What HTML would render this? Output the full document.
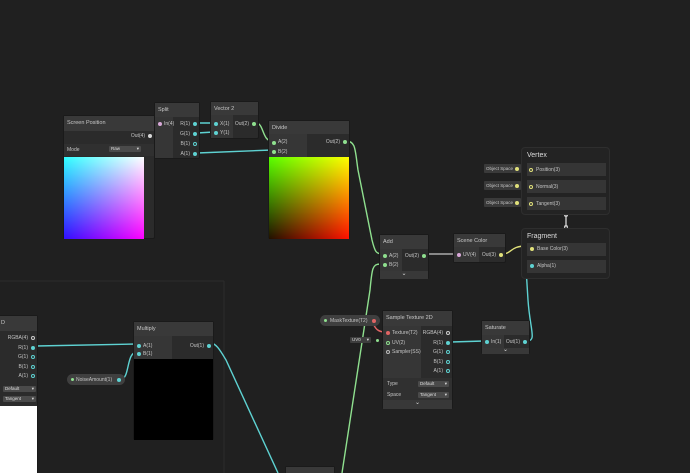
<!DOCTYPE html>
<html><head><meta charset="utf-8"><style>
*{margin:0;padding:0;box-sizing:border-box}
html,body{width:690px;height:473px;overflow:hidden}
body{background:#202020;position:relative;font-family:"Liberation Sans",sans-serif;font-size:5px;color:#c4c4c4}
.n{position:absolute;background:#2b2b2b;border:1px solid #1a1a1a;border-radius:2px}
.h{position:absolute;left:0;right:0;top:0;background:#393939;color:#c8c8c8;padding:4px 3px 0;font-size:5.5px}
.a{position:absolute;white-space:nowrap;line-height:6px}
.r{position:absolute;background:#333}
.p{position:absolute;width:4px;height:4px;border-radius:50%}
.g{background:#8fe08f}.c{background:#5ed2d2}.m{background:#d8a8d8}.y{background:#e0e07a}.rd{background:#e06464}
.o{border:1px solid #5ed2d2;background:transparent}
.dd{position:absolute;background:#4a4a4a;border-radius:1px;height:6px;font-size:4.5px;padding-left:2px;line-height:6px;color:#ddd}
.dd:after{content:"▾";position:absolute;right:2px;top:0}
.blk{position:absolute;border:1px solid #2e2e2e;border-radius:4px;background:#232323}
.row{position:absolute;left:5px;right:3px;height:13px;background:#353535}
.pill{position:absolute;background:#3f3f3f;border-radius:6px;height:10px}
</style></head><body>

<svg width="690" height="473" style="position:absolute;left:0;top:0">
<g fill="none" stroke-width="1.4">
<path d="M224 281 L0 281 M224 281 L224 473" stroke="#2c2c2c" stroke-width="1"/>
<path d="M152 135 C160 135 150 123 159 123" stroke="#d8a8d8"/>
<path d="M197 123 L205 123 C207 123 207 123 214 123" stroke="#5ed2d2"/>
<path d="M197 133 L214 132" stroke="#5ed2d2"/>
<path d="M197 153 L272 150" stroke="#5ed2d2"/>
<path d="M256 123 C264 123 262 141 272 141" stroke="#8fe08f"/>
<path d="M346 141 C356 141 355 150 358 170 L372 240 C375 252 376 254 383 254" stroke="#8fe08f"/>
<path d="M425 254 L457 254" stroke="#aaa"/>
<path d="M502 254 C512 254 510 246 526 246" stroke="#e0e07a"/>
<path d="M380 264 C372 264 372 270 370 290 L342 473" stroke="#8fe08f"/>
<path d="M369 320 C375 320 372 332 385 332" stroke="#e06464"/>
<path d="M36 346 L137 344" stroke="#5ed2d2"/>
<path d="M121 379 C130 379 126 352 137 352" stroke="#5ed2d2"/>
<path d="M210 343 C216 343 220 350 226 360 L278 473" stroke="#5ed2d2"/>
<path d="M451 342 L484 341" stroke="#5ed2d2"/>
<path d="M527 341 C537 341 530 330 528 300 L526 268 C525 265 528 266 530 266" stroke="#5ed2d2"/>
<path d="M566 215 L566 227" stroke="#ccc"/>
<path d="M514 169 L524 169 M514 186 L524 186 M514 202 L524 202" stroke="#e0e07a"/>
</g>
<circle cx="566" cy="215" r="1.5" fill="none" stroke="#ccc"/><circle cx="566" cy="227" r="1.5" fill="none" stroke="#ccc"/>
</svg>

<div class="n" style="left:63px;top:115px;width:92px;height:124px">
<div class="h" style="height:15px">Screen Position</div>
<div class="a" style="right:9px;top:17px">Out(4)</div><div class="p" style="right:2px;top:18px;background:#d8d8d8"></div>
<div class="r" style="left:0;right:0;top:28px;height:12px;background:#303030"></div>
<div class="a" style="left:3px;top:31px">Mode</div>
<div class="dd" style="left:45px;top:30px;width:32px">Raw</div>
<div style="position:absolute;left:0;top:41px;width:80px;height:82px;background:linear-gradient(to right,#3010ff,#ff00ff)"><div style="position:absolute;inset:0;background:linear-gradient(to bottom,#00ff00,#000);mix-blend-mode:screen"></div></div>
</div>

<div class="n" style="left:154px;top:102px;width:46px;height:57px">
<div class="h" style="height:14px">Split</div>
<div class="r" style="left:0;width:18px;top:14px;bottom:0;background:#363636"></div>
<div class="p m" style="left:3px;top:19px"></div><div class="a" style="left:9px;top:18px">In(4)</div>
<div class="a" style="right:9px;top:18px">R(1)</div><div class="p c" style="right:2px;top:19px"></div>
<div class="a" style="right:9px;top:28px">G(1)</div><div class="p c" style="right:2px;top:29px"></div>
<div class="a" style="right:9px;top:38px">B(1)</div><div class="p o" style="right:2px;top:39px"></div>
<div class="a" style="right:9px;top:48px">A(1)</div><div class="p c" style="right:2px;top:49px"></div>
</div>

<div class="n" style="left:210px;top:101px;width:49px;height:38px">
<div class="h" style="height:13px">Vector 2</div>
<div class="r" style="left:0;width:22px;top:13px;bottom:0;background:#363636"></div>
<div class="p c" style="left:3px;top:20px"></div><div class="a" style="left:9px;top:19px">X(1)</div>
<div class="p c" style="left:3px;top:29px"></div><div class="a" style="left:9px;top:28px">Y(1)</div>
<div class="a" style="right:9px;top:19px">Out(2)</div><div class="p g" style="right:2px;top:20px"></div>
</div>

<div class="n" style="left:268px;top:120px;width:82px;height:119px">
<div class="h" style="height:13px">Divide</div>
<div class="r" style="left:0;width:38px;top:13px;height:23px;background:#363636"></div>
<div class="p g" style="left:3px;top:20px"></div><div class="a" style="left:9px;top:18px">A(2)</div>
<div class="p g" style="left:3px;top:29px"></div><div class="a" style="left:9px;top:28px">B(2)</div>
<div class="a" style="right:9px;top:18px">Out(2)</div><div class="p g" style="right:2px;top:19px"></div>
<div style="position:absolute;left:0;top:36px;width:80px;height:82px;background:linear-gradient(to right,#201000,#ff1000)"><div style="position:absolute;inset:0;background:linear-gradient(to bottom,#40ff00,#000);mix-blend-mode:screen"></div></div>
</div>

<div class="n" style="left:379px;top:234px;width:50px;height:45px">
<div class="h" style="height:14px">Add</div>
<div class="r" style="left:0;width:22px;top:14px;height:22px;background:#363636"></div>
<div class="p g" style="left:3px;top:19px"></div><div class="a" style="left:9px;top:18px">A(2)</div>
<div class="p g" style="left:3px;top:28px"></div><div class="a" style="left:9px;top:27px">B(2)</div>
<div class="a" style="right:9px;top:18px">Out(2)</div><div class="p g" style="right:2px;top:19px"></div>
<div class="r" style="left:0;right:0;top:36px;height:8px;background:#383838;text-align:center;font-size:6px;line-height:7px;color:#ddd">⌄</div>
</div>

<div class="n" style="left:453px;top:233px;width:53px;height:30px">
<div class="h" style="height:13px">Scene Color</div>
<div class="r" style="left:0;width:25px;top:13px;bottom:0;background:#363636"></div>
<div class="p m" style="left:3px;top:19px"></div><div class="a" style="left:9px;top:18px">UV(4)</div>
<div class="a" style="right:9px;top:18px">Out(3)</div><div class="p y" style="right:2px;top:19px"></div>
</div>

<div class="blk" style="left:521px;top:147px;width:89px;height:68px">
<div class="a" style="left:5px;top:5px;font-size:7px;color:#ddd">Vertex</div>
<div class="row" style="top:15px"></div><div class="row" style="top:32px"></div><div class="row" style="top:49px"></div>
<div class="a" style="left:14px;top:19px">Position(3)</div><div class="a" style="left:14px;top:36px">Normal(3)</div><div class="a" style="left:14px;top:53px">Tangent(3)</div>
<div class="p" style="left:7px;top:20px;border:1px solid #e0e07a"></div><div class="p" style="left:7px;top:37px;border:1px solid #e0e07a"></div><div class="p" style="left:7px;top:54px;border:1px solid #e0e07a"></div>
</div>
<div class="pill" style="left:484px;top:164px;width:37px;height:9px;border-radius:1px;background:#3a3a3a"><div class="a" style="left:2px;top:1.5px;font-size:4.5px">Object Space</div><div class="p y" style="right:2px;top:2.5px"></div></div>
<div class="pill" style="left:484px;top:181px;width:37px;height:9px;border-radius:1px;background:#3a3a3a"><div class="a" style="left:2px;top:1.5px;font-size:4.5px">Object Space</div><div class="p y" style="right:2px;top:2.5px"></div></div>
<div class="pill" style="left:484px;top:198px;width:37px;height:9px;border-radius:1px;background:#3a3a3a"><div class="a" style="left:2px;top:1.5px;font-size:4.5px">Object Space</div><div class="p y" style="right:2px;top:2.5px"></div></div>

<div class="blk" style="left:521px;top:228px;width:89px;height:51px">
<div class="a" style="left:5px;top:5px;font-size:7px;color:#ddd">Fragment</div>
<div class="row" style="top:14px"></div><div class="row" style="top:31px"></div>
<div class="p y" style="left:8px;top:18px"></div><div class="a" style="left:15px;top:17px">Base Color(3)</div>
<div class="p c" style="left:8px;top:35px"></div><div class="a" style="left:15px;top:34px">Alpha(1)</div>
</div>

<div class="pill" style="left:320px;top:315px;width:60px;height:11px"><div class="p g" style="left:4px;top:3.5px;width:3px;height:3px"></div><div class="a" style="left:10px;top:3px">MaskTexture(T2)</div><div class="p rd" style="right:4px;top:3.5px"></div></div>
<div class="dd" style="left:350px;top:337px;width:21px;background:#3e3e3e">UV0</div>
<div class="p g" style="left:376px;top:339px;width:3px;height:3px"></div>

<div class="n" style="left:382px;top:310px;width:71px;height:99px">
<div class="h" style="height:15px">Sample Texture 2D</div>
<div class="r" style="left:0;width:38px;top:15px;height:52px;background:#363636"></div>
<div class="p rd" style="left:3px;top:20px"></div><div class="a" style="left:9px;top:19px">Texture(T2)</div>
<div class="p" style="left:3px;top:30px;border:1px solid #8fe08f"></div><div class="a" style="left:9px;top:29px">UV(2)</div>
<div class="p" style="left:3px;top:39px;border:1px solid #bbb"></div><div class="a" style="left:9px;top:38px">Sampler(SS)</div>
<div class="a" style="right:9px;top:19px">RGBA(4)</div><div class="p" style="right:2px;top:20px;border:1px solid #ccc"></div>
<div class="a" style="right:9px;top:29px">R(1)</div><div class="p c" style="right:2px;top:30px"></div>
<div class="a" style="right:9px;top:38px">G(1)</div><div class="p o" style="right:2px;top:39px"></div>
<div class="a" style="right:9px;top:48px">B(1)</div><div class="p o" style="right:2px;top:49px"></div>
<div class="a" style="right:9px;top:57px">A(1)</div><div class="p o" style="right:2px;top:58px"></div>
<div class="r" style="left:0;right:0;top:67px;height:22px;background:#303030"></div>
<div class="a" style="left:4px;top:70px">Type</div><div class="dd" style="left:35px;top:70px;width:31px">Default</div>
<div class="a" style="left:4px;top:81px">Space</div><div class="dd" style="left:35px;top:81px;width:31px">Tangent</div>
<div class="r" style="left:0;right:0;top:89px;height:9px;background:#383838;text-align:center;font-size:6px;line-height:7px;color:#ddd">⌄</div>
</div>

<div class="n" style="left:481px;top:320px;width:49px;height:34px">
<div class="h" style="height:14px">Saturate</div>
<div class="r" style="left:0;width:22px;top:14px;height:13px;background:#363636"></div>
<div class="p c" style="left:3px;top:19px"></div><div class="a" style="left:9px;top:18px">In(1)</div>
<div class="a" style="right:9px;top:18px">Out(1)</div><div class="p c" style="right:2px;top:19px"></div>
<div class="r" style="left:0;right:0;top:27px;height:6px;background:#383838;text-align:center;font-size:6px;line-height:4px;color:#ddd">⌄</div>
</div>

<div class="n" style="left:133px;top:321px;width:81px;height:119px">
<div class="h" style="height:14px">Multiply</div>
<div class="r" style="left:0;width:38px;top:14px;height:23px;background:#363636"></div>
<div class="p c" style="left:3px;top:22px"></div><div class="a" style="left:9px;top:21px">A(1)</div>
<div class="p c" style="left:3px;top:30px"></div><div class="a" style="left:9px;top:29px">B(1)</div>
<div class="a" style="right:9px;top:21px">Out(1)</div><div class="p c" style="right:2px;top:22px"></div>
<div style="position:absolute;left:0;top:37px;width:79px;height:81px;background:#000"></div>
</div>

<div class="pill" style="left:67px;top:374px;width:58px;height:11px"><div class="p g" style="left:4px;top:4px;width:3px;height:3px"></div><div class="a" style="left:9px;top:3px">NoiseAmount(1)</div><div class="p c" style="right:4px;top:3.5px"></div></div>

<div class="n" style="left:-10px;top:315px;width:48px;height:170px;background:#2b2b2b">
<div class="h" style="height:15px;background:#393939"><span style="position:absolute;left:10px;top:4px">D</span></div>
<div class="a" style="right:9px;top:19px">RGBA(4)</div><div class="p" style="right:2px;top:20px;border:1px solid #ccc"></div>
<div class="a" style="right:9px;top:29px">R(1)</div><div class="p c" style="right:2px;top:30px"></div>
<div class="a" style="right:9px;top:38px">G(1)</div><div class="p o" style="right:2px;top:39px"></div>
<div class="a" style="right:9px;top:48px">B(1)</div><div class="p o" style="right:2px;top:49px"></div>
<div class="a" style="right:9px;top:57px">A(1)</div><div class="p o" style="right:2px;top:58px"></div>
<div class="dd" style="left:12px;top:70px;width:33px">Default</div>
<div class="dd" style="left:12px;top:80px;width:33px">Tangent</div>
<div style="position:absolute;left:0;right:0;top:90px;bottom:0;background:#fff"></div>
</div>

<div class="n" style="left:285px;top:466px;width:50px;height:20px"><div class="h" style="height:14px"></div></div>
</body></html>
